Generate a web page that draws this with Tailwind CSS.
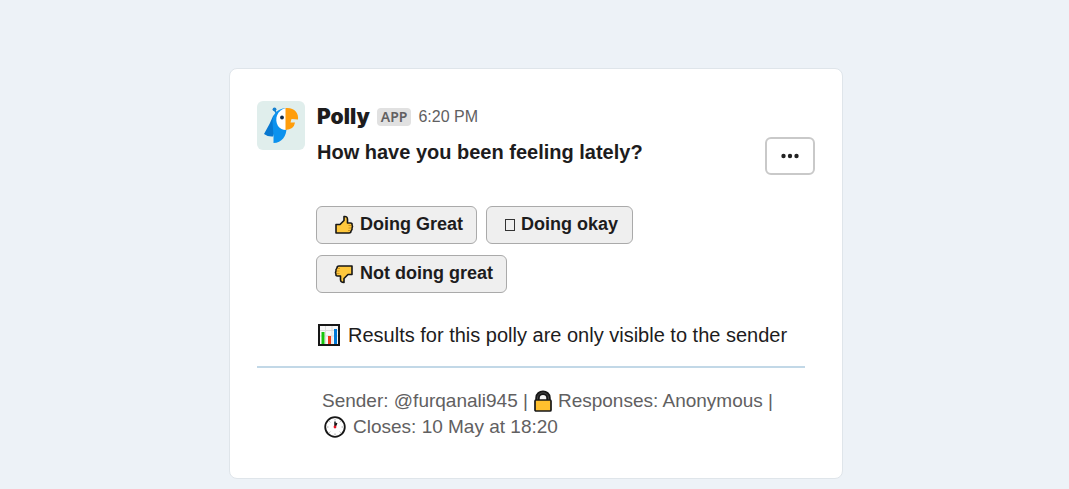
<!DOCTYPE html>
<html lang="en">
<head>
<meta charset="utf-8">
<meta name="viewport" content="width=device-width, initial-scale=1">
<title>Polly</title>
<script src="https://cdn.jsdelivr.net/npm/@tailwindcss/browser@4"></script>
</head>
<body class="min-h-screen bg-[#edf2f7] pt-17 pb-2.5 pl-[3px] font-['Liberation_Sans',Arial,sans-serif] text-[#1d1c1d]">
<main class="mx-auto max-w-[614px] rounded-lg border border-[#dfe5ea] bg-white pt-8 pr-[27px] pb-[38px] pl-[27px]">
  <article>
    <div class="flex gap-[11px]">
      <svg class="h-[49px] w-12 shrink-0" viewBox="0 0 48 49" role="img" aria-label="Polly">
        <rect width="48" height="49" rx="6" fill="#e0eeec"/>
        <path d="M16.500 14Q13 23 7 33Q11 36 16 35.500L20 24Z" fill="#0878d0"/>
        <path d="M17.500 9l2.500 4" stroke="#1580d0" stroke-width="1.500"/>
        <circle cx="17.500" cy="8.300" r="1.900" fill="#1580d0"/>
        <path d="M29 7C20 8 15.500 13 15.500 21L16.500 35.500V42C25 42 29.500 35 29.500 27Z" fill="#0c92ee"/>
        <path d="M29 7C20 9 17 18 21 25Q24 29 29 29Z" fill="#fff"/>
        <path d="M28.500 7C37 6 42 12 41 18.500L34.500 18 33.500 21.500H38Q37 28.500 28.500 29Z" fill="#ff9d0b"/>
        <circle cx="25" cy="16.500" r="1.900" fill="#102b4a"/>
      </svg>
      <div class="min-w-0 flex-1">
        <header class="flex h-8 items-center gap-[7px] pl-px">
          <strong class="font-['Inter',sans-serif] text-[21px] leading-8 font-black">Polly</strong>
          <span class="rounded-sm bg-[#e1e1e1] px-[4px] font-['Noto_Sans',sans-serif] text-[14px] leading-[18px] font-semibold text-[#616061]">APP</span>
          <time class="text-base text-[#616061]">6:20 PM</time>
        </header>
        <div class="flex items-start justify-between pt-1 pl-px">
          <h1 class="pt-0.5 text-[20px] leading-[26px] font-bold">How have you been feeling lately?</h1>
          <button type="button" aria-label="More actions" class="flex h-[38px] w-[50px] shrink-0 items-center justify-center rounded-md border-2 border-[#c9c9c9] bg-white">
            <svg class="h-1.5 w-5" viewBox="0 0 20 6" fill="#222"><circle cx="3.500" cy="3" r="2.200"/><circle cx="10" cy="3" r="2.200"/><circle cx="16.500" cy="3" r="2.200"/></svg>
          </button>
        </div>
        <div class="mt-[31px] flex max-w-[360px] flex-wrap gap-x-[9px] gap-y-[11px] text-[18px] font-bold">
          <button type="button" class="flex h-[38px] items-center gap-1.5 rounded-md border border-[#aaa] bg-[#efefef] pr-[13px] pb-0.5 pl-[17px]">
            <svg class="mt-0.5 h-5 w-5" viewBox="0 0 20 20" stroke="#171717" stroke-width="1.600" stroke-linejoin="round" aria-hidden="true"><path d="M2 9.500H6L10 5.500V1.500Q13.500 1 13.500 4.500V8H16.500Q18.500 8 18 10Q19 11.500 18 13Q18.500 14.500 17 16Q17 18 15 18H2Z" fill="#ffc83d"/><path d="M14.500 10.500H17.500M14.500 13H17.500M14 15.500H16.500" stroke="#b77c16" stroke-width=".7"/></svg>
            Doing Great
          </button>
          <button type="button" class="flex h-[38px] items-center gap-1.5 rounded-md border border-[#aaa] bg-[#efefef] pr-[14px] pb-0.5 pl-[18px]">
            <span class="mt-0.5 h-3 w-2.5 border border-[#333]"></span>
            Doing okay
          </button>
          <button type="button" class="flex h-[38px] items-center gap-1.5 rounded-md border border-[#aaa] bg-[#efefef] pr-[13px] pb-0.5 pl-[17px]">
            <svg class="mt-0.5 h-5 w-5" viewBox="0 0 20 20" stroke="#171717" stroke-width="1.600" stroke-linejoin="round" aria-hidden="true"><path d="M18 2V10.500H14L10 14.500V18.500Q6.500 18.500 6.500 15.500V12H3.500Q1.500 12 2 10Q1 8.500 2 7Q1.500 5.500 3 4Q3 2 5 2Z" fill="#ffc83d"/><path d="M2.500 9.500H5.500M2.500 7H5.500M3.500 4.500H6" stroke="#b77c16" stroke-width=".7"/></svg>
            Not doing great
          </button>
        </div>
        <p class="mt-[29px] flex items-center gap-2 pl-0.5 text-[20px] leading-[26px]">
          <svg class="h-[22px] w-[22px] shrink-0" viewBox="0 0 22 22" aria-hidden="true"><rect x="1" y="1" width="20" height="20" fill="#f8f8f8" stroke="#171717" stroke-width="2"/><path d="M2 6.500H20M2 12H20M7.500 2V20M14 2V20" stroke="#ddd"/><path d="M3.500 8H6.500V20H3.500Z" fill="#16c60c"/><path d="M10 12H13V20H10Z" fill="#f03a17"/><path d="M16 5H19V20H16Z" fill="#0078d7"/></svg>
          Results for this polly are only visible to the sender
        </p>
      </div>
    </div>
    <hr class="mt-[18px] mr-[10px] border-t-2 border-[#c2d8e7]">
    <footer class="mt-5 pl-[65px] text-[19px] leading-[26px] text-[#616061]">
      <p class="flex flex-wrap items-center gap-x-[5px]">
        <span>Sender: @furqanali945 |</span>
        <svg class="h-[22px] w-5 shrink-0" viewBox="0 0 20 22" aria-hidden="true"><path d="M4.500 11V8C4.500 1 15.500 1 15.500 8V11" fill="#f5f5f5" stroke="#171717" stroke-width="4.500"/><path d="M4.500 11V8C4.500 1 15.500 1 15.500 8V11" fill="none" stroke="#464646" stroke-width="1"/><rect x="2" y="10" width="16" height="11" rx="1" fill="#ffc02e" stroke="#171717" stroke-width="1.700"/></svg>
        <span>Responses: Anonymous |</span>
      </p>
      <p class="flex items-center gap-[7px] pl-0.5">
        <svg class="h-[22px] w-[22px] shrink-0" viewBox="0 0 22 22" aria-hidden="true"><circle cx="11" cy="11" r="9.800" fill="#fff" stroke="#171717" stroke-width="1.800"/><path d="M11 3V4.500M11 17.500V19M3 11H4.500M17.500 11H19M5.300 5.300l1 1M15.700 15.700l1 1M5.300 16.700l1-1M15.700 6.300l1-1" stroke="#aaa"/><path d="M11 11V5.500M11 11L12.800 7" stroke="#171717" stroke-width="1.500"/><circle cx="11" cy="11" r="1.400" fill="#e81224"/></svg>
        Closes: 10 May at 18:20
      </p>
    </footer>
  </article>
</main>
</body>
</html>
